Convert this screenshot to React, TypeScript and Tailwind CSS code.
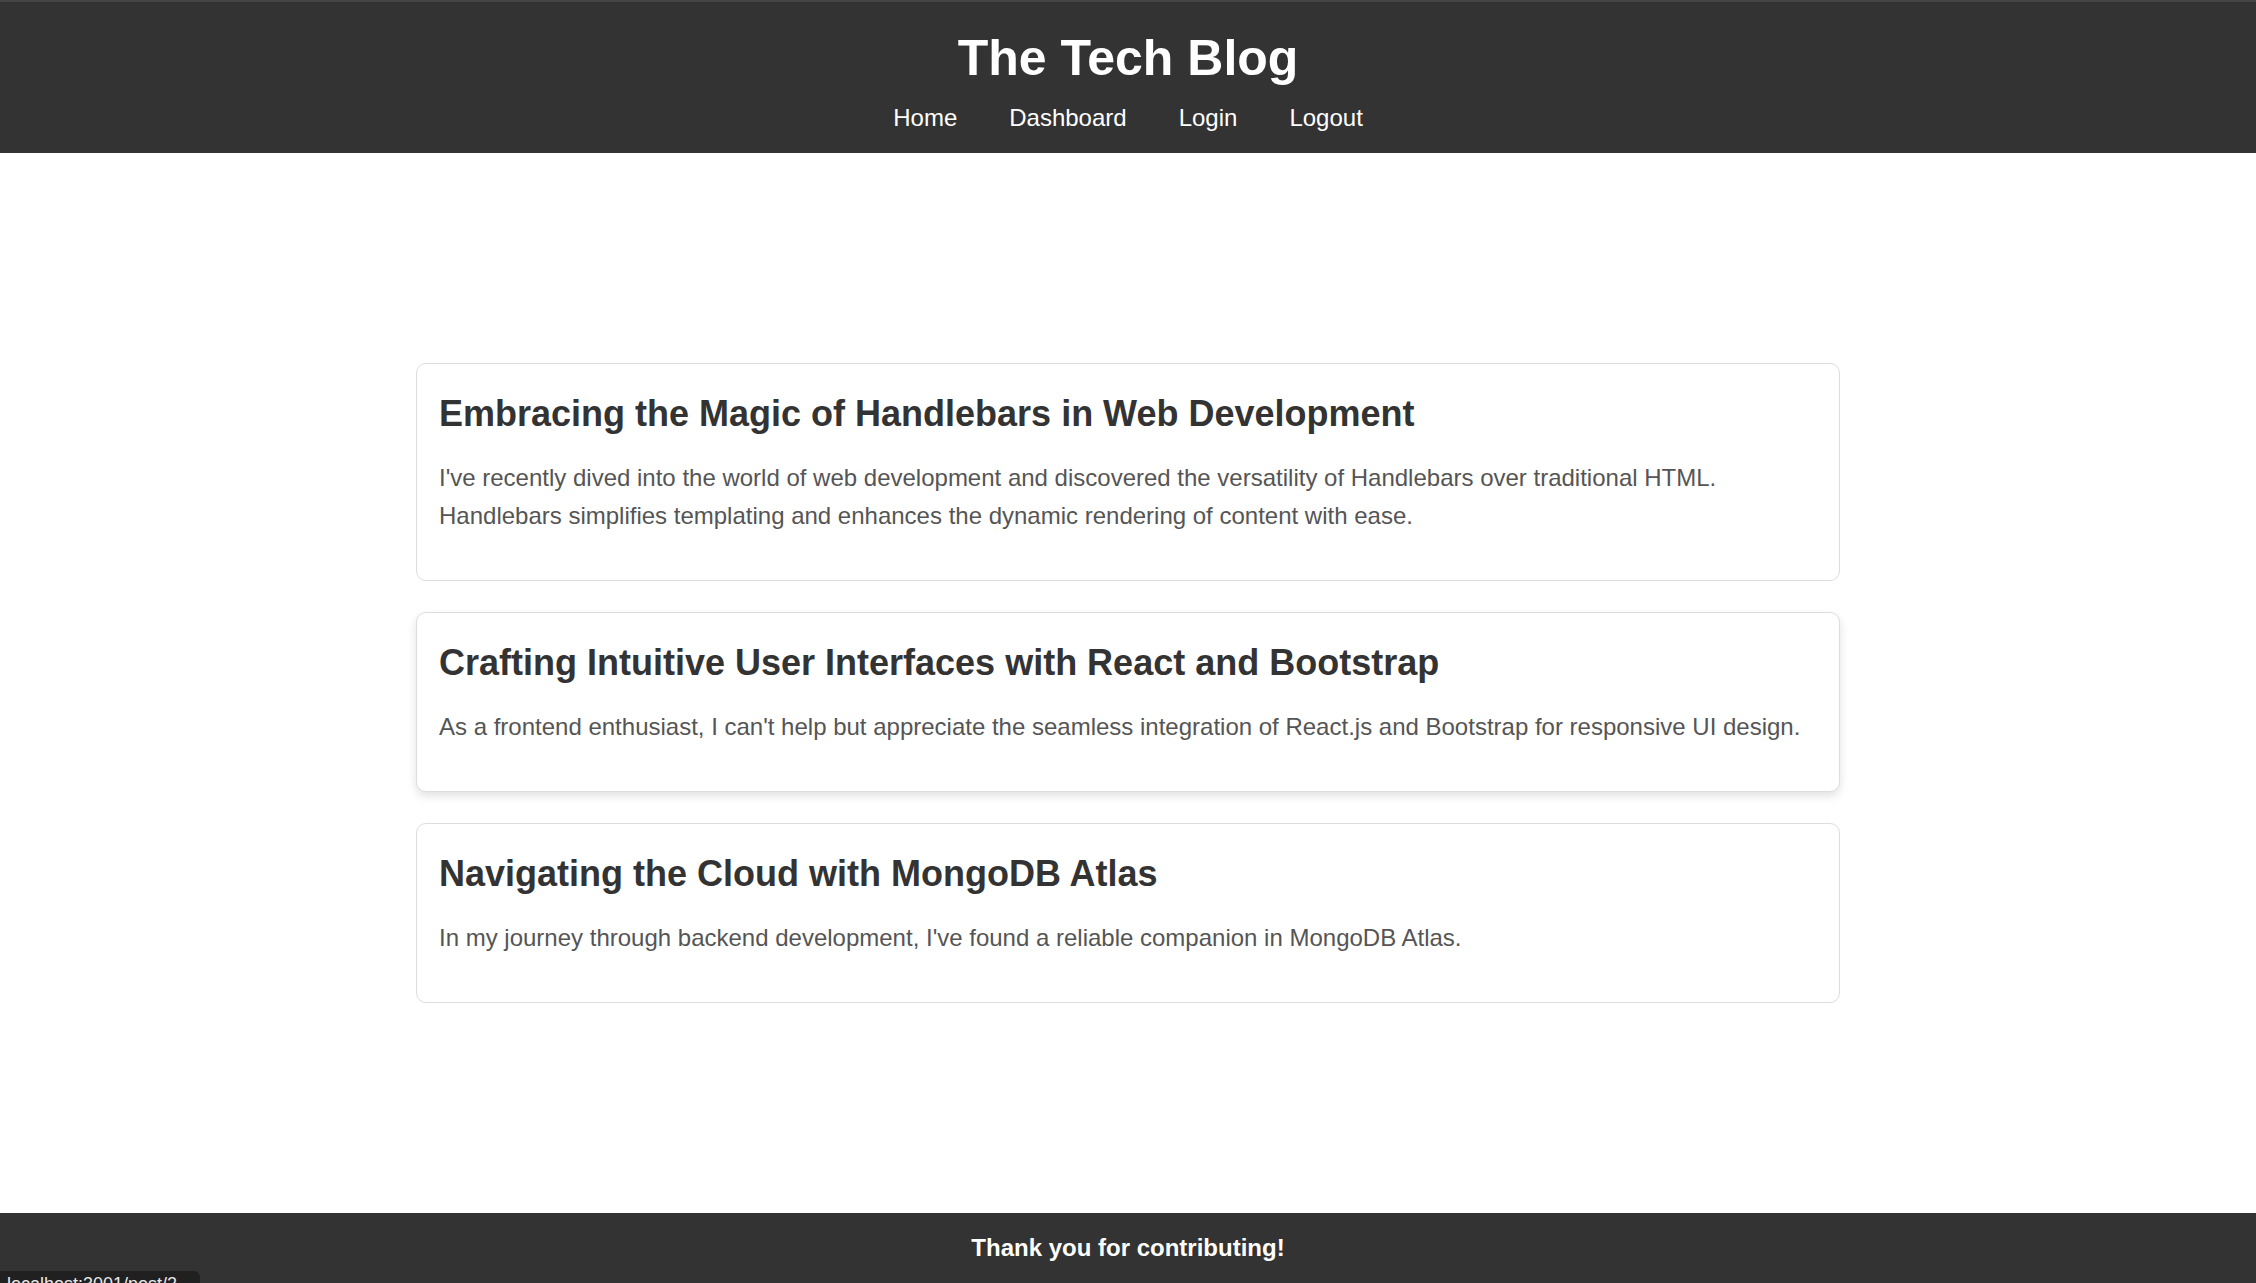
const posts = [
  {
    id: 1,
    title: "Embracing the Magic of Handlebars in Web Development",
    body: "I've recently dived into the world of web development and discovered the versatility of Handlebars over traditional HTML. Handlebars simplifies templating and enhances the dynamic rendering of content with ease.",
  },
  {
    id: 2,
    title: "Crafting Intuitive User Interfaces with React and Bootstrap",
    body: "As a frontend enthusiast, I can't help but appreciate the seamless integration of React.js and Bootstrap for responsive UI design.",
    hovered: true,
  },
  {
    id: 3,
    title: "Navigating the Cloud with MongoDB Atlas",
    body: "In my journey through backend development, I've found a reliable companion in MongoDB Atlas.",
  },
];

export default function App() {
  return (
    <div className="min-h-screen flex flex-col bg-white font-['Liberation_Sans',Arial,sans-serif]">
      <header className="bg-[#333] border-t-2 border-[#454545] text-white text-center pt-[27px] pb-[21px]">
        <h1 className="text-[50px] leading-[58px] font-bold">The Tech Blog</h1>
        <nav className="mt-[17px] flex justify-center gap-[52px] text-[24px] leading-[28px]">
          <a href="#">Home</a>
          <a href="#">Dashboard</a>
          <a href="#">Login</a>
          <a href="#">Logout</a>
        </nav>
      </header>

      <main className="flex-1 pt-[210px]">
        <div className="w-[1424px] mx-auto flex flex-col gap-[31px]">
          {posts.map((post) => (
            <div
              key={post.id}
              className={
                "bg-white border border-[#ddd] rounded-[10px] px-[22px] pt-[29px] pb-[45px] " +
                (post.hovered ? "shadow-[0_4px_10px_rgba(0,0,0,0.12)]" : "")
              }
            >
              <h2 className="text-[36px] leading-[41px] font-bold text-[#333]">{post.title}</h2>
              <p className="mt-[25px] text-[24px] leading-[38px] text-[#555]">{post.body}</p>
            </div>
          ))}
        </div>
      </main>

      <footer className="bg-[#333] h-[70px] flex items-center justify-center text-white text-[24px] font-bold">
        Thank you for contributing!
      </footer>

      <div className="fixed left-0 bottom-[-14px] w-[200px] h-[26px] bg-[#202020] rounded-tr-[6px] px-[7px] text-[18px] leading-[26px] text-[#e8e8e8] overflow-hidden whitespace-nowrap">
        localhost:3001/post/2
      </div>
    </div>
  );
}
